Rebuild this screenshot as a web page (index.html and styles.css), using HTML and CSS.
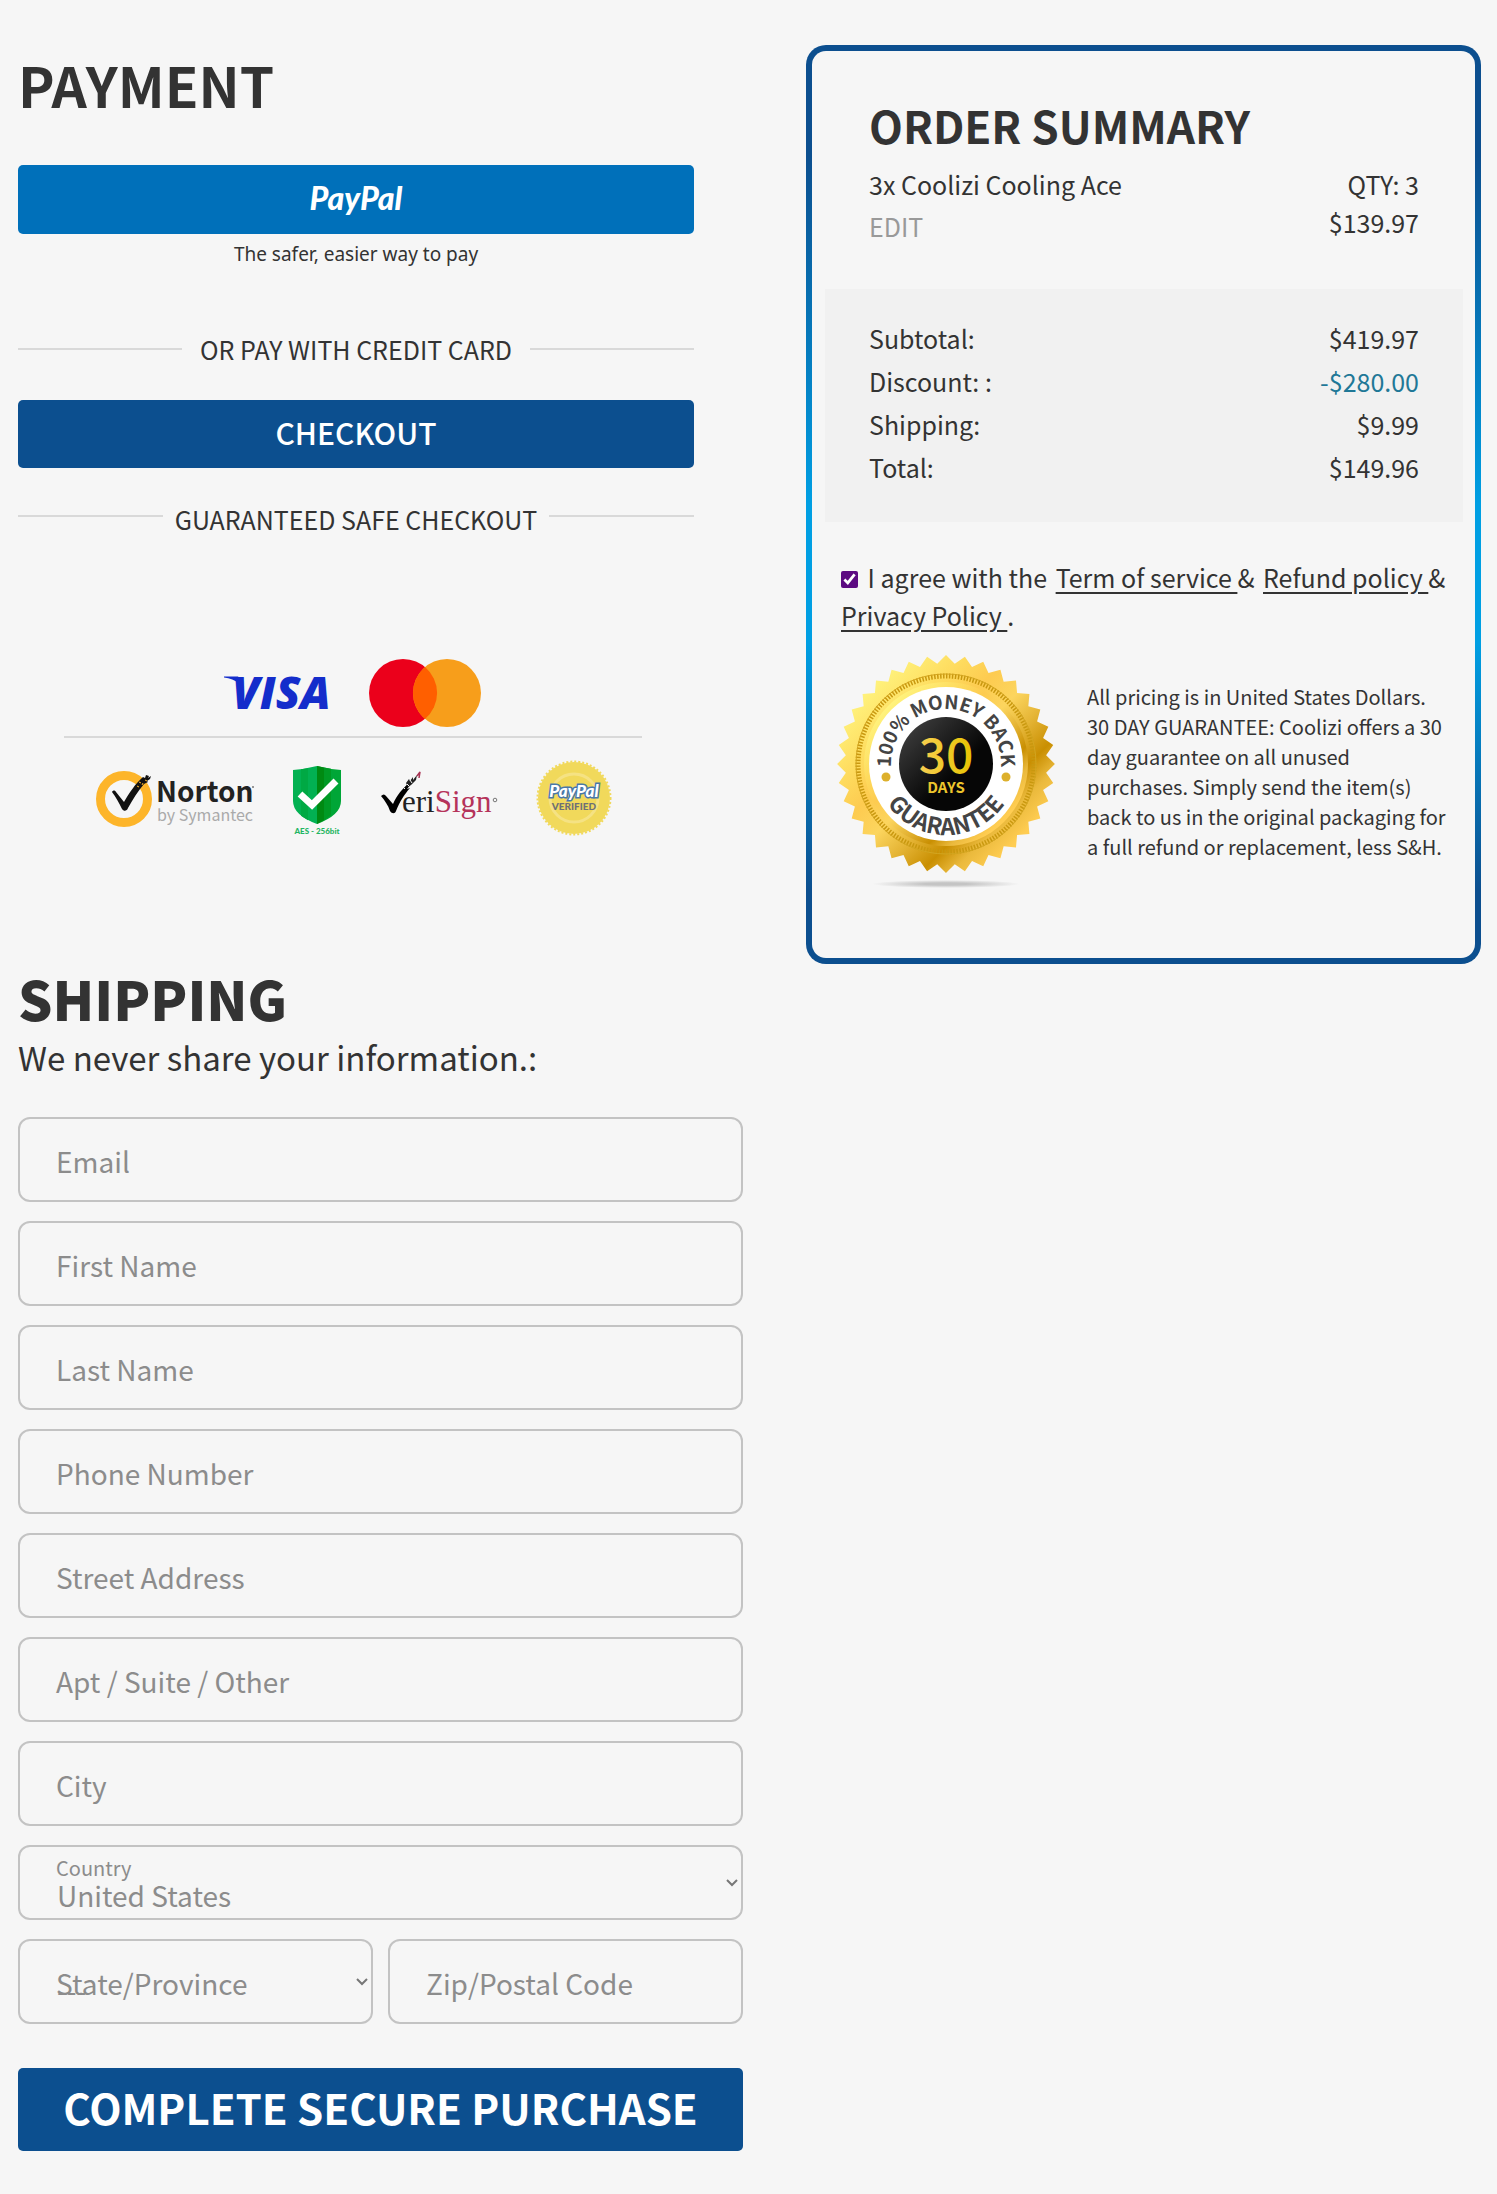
FILE: index.html
```
<!DOCTYPE html>
<html lang="en">
<head>
    <meta charset="UTF-8">
    <meta name="viewport" content="width=device-width, initial-scale=1.0">
    <title>Checkout</title>
    <link rel="stylesheet" href="styles.css">
</head>
<body>
    <main class="checkout">
        <div class="checkout-main">
            <section class="payment">
                <h1 class="payment-title">PAYMENT</h1>
                <button type="button" class="btn btn-paypal">PayPal</button>
                <p class="paypal-note">The safer, easier way to pay</p>
                <div class="divider">OR PAY WITH CREDIT CARD</div>
                <button type="button" class="btn btn-checkout">CHECKOUT</button>
                <div class="divider divider-tight">GUARANTEED SAFE CHECKOUT</div>

                <div class="badges">
                    <div class="badge-row badge-cards">
                        <svg width="112" height="40" viewBox="0 -3 112 40" role="img" aria-label="Visa">
                            <path d="M0 .5h14l4 4-3 3C11 4 6 2 0 1.500z" fill="#142dcb"/>
                            <text class="visa" x="8" y="33">VISA</text>
                        </svg>
                        <svg width="114" height="68" viewBox="0 0 114 68" role="img" aria-label="Mastercard">
                            <circle cx="35" cy="34" r="34" fill="#eb001b"/>
                            <circle cx="79" cy="34" r="34" fill="#f79e1b"/>
                            <path d="M57 8a34 34 0 0 1 0 52a34 34 0 0 1 0-52z" fill="#ff5f00"/>
                        </svg>
                    </div>
                    <div class="badge-row">
                        <svg width="160" height="76" viewBox="0 0 160 76" role="img" aria-label="Norton by Symantec">
                            <circle cx="30" cy="39" r="23.500" fill="none" stroke="#fdb52a" stroke-width="9"/>
                            <path d="M18 32c1-2 3-2 4 0l8 10c6-10 11-18 19-25l2 1 1-3 3 1-1 2 3-2-1 3-3 2 1 1-4 2c-6 7-11 15-16 24-1 3-4 4-6 1-3-6-6-12-10-17z" fill="#111"/>
                            <path d="M45 22l2 1M48 25l1-2M51 20l2 1M43 26l2 1" stroke="#fdb52a" stroke-width="1"/>
                            <text class="norton" x="62" y="42">Norton</text>
                            <text class="symantec" x="63" y="61">by Symantec</text>
                            <circle cx="159" cy="27" r="1" fill="#777"/>
                        </svg>
                        <svg width="50" height="76" viewBox="0 0 50 76" role="img" aria-label="AES 256 bit">
                            <path d="M25 6Q13 9 1 10v31q0 14 24 23z" fill="#02b152"/>
                            <path d="M16 8.200 9 9.300v46.500l7 4.500z" fill="#00a944"/>
                            <path d="M25 6q12 3 24 4v31q0 14-24 23z" fill="#00a637"/>
                            <path d="M25 6l7 1.500v52.800L25 64z" fill="#008a12"/>
                            <path d="M32 7.500l7 1.200v46.500l-7 5z" fill="#009a25"/>
                            <path d="M8 34l12 11 24-24" fill="none" stroke="#fff" stroke-width="7"/>
                            <text class="aes" x="25" y="74" text-anchor="middle">AES - 256bit</text>
                        </svg>
                        <svg width="118" height="76" viewBox="0 0 118 76" role="img" aria-label="VeriSign">
                            <path d="M1 36q3-3 5 0l7 8c4-9 9-15 17-22l1 2-4 5 3-1c-6 7-10 13-14 23-1 3-4 3-6 0-2-6-5-10-9-15z" fill="#000"/>
                            <path d="M26 23l3-4 1 2 3-4v3l4-5-1 5-5 5-3 2z" fill="#222"/>
                            <path d="M27 24l2 2M30 20l2 3M23 27l2 2" stroke="#f6f6f6"/>
                            <path d="M37 16l3-4-1 6" fill="none" stroke="#a83253" stroke-width="1.500"/>
                            <text class="verisign" x="22" y="52">eri<tspan fill="#b5335a">Sign</tspan></text>
                            <circle cx="115" cy="40" r="1.800" fill="none" stroke="#777"/>
                        </svg>
                        <svg width="76" height="76" viewBox="0 0 76 76" role="img" aria-label="PayPal Verified">
                            <circle cx="38" cy="38" r="36" fill="#f1d95b"/>
                            <circle cx="38" cy="38" r="36.500" fill="none" stroke="#f1d95b" stroke-width="2" stroke-dasharray="2 2"/>
                            <circle cx="38" cy="38" r="24" fill="none" stroke="#f5e283" stroke-width="3"/>
                            <text class="pp-badge" x="38" y="37" text-anchor="middle">PayPal</text>
                            <text class="pp-verified" x="38" y="50" text-anchor="middle">VERIFIED</text>
                        </svg>
                    </div>
                </div>
            </section>

            <form class="shipping">
                <h2 class="shipping-title">SHIPPING</h2>
                <p class="shipping-note">We never share your information.:</p>

                <div class="fields">
                    <div class="field">
                        <input type="email" id="email">
                        <label for="email">Email</label>
                    </div>
                    <div class="field">
                        <input type="text" id="firstName">
                        <label for="firstName">First Name</label>
                    </div>
                    <div class="field">
                        <input type="text" id="lastName">
                        <label for="lastName">Last Name</label>
                    </div>
                    <div class="field">
                        <input type="tel" id="phone">
                        <label for="phone">Phone Number</label>
                    </div>
                    <div class="field">
                        <input type="text" id="street">
                        <label for="street">Street Address</label>
                    </div>
                    <div class="field">
                        <input type="text" id="apt">
                        <label for="apt">Apt / Suite / Other</label>
                    </div>
                    <div class="field">
                        <input type="text" id="city">
                        <label for="city">City</label>
                    </div>
                    <div class="field field-filled">
                        <select id="country">
                            <option>United States</option>
                        </select>
                        <label for="country">Country</label>
                        <svg class="chevron" width="12" height="8" viewBox="0 0 12 8"><path d="M1 1l5 5 5-5"/></svg>
                    </div>
                    <div class="field-pair">
                        <div class="field">
                            <select id="state">
                                <option>---</option>
                            </select>
                            <label for="state">State/Province</label>
                            <svg class="chevron" width="12" height="8" viewBox="0 0 12 8"><path d="M1 1l5 5 5-5"/></svg>
                        </div>
                        <div class="field">
                            <input type="text" id="zip">
                            <label for="zip">Zip/Postal Code</label>
                        </div>
                    </div>
                </div>

                <button type="submit" class="btn btn-complete">COMPLETE SECURE PURCHASE</button>
            </form>
        </div>

        <aside class="summary">
            <h2 class="summary-title">ORDER SUMMARY</h2>
            <div class="summary-item">
                <div>
                    <div>3x Coolizi Cooling Ace</div>
                    <a href="#" class="edit-link">EDIT</a>
                </div>
                <div class="item-price">
                    <div>QTY: 3</div>
                    <div>$139.97</div>
                </div>
            </div>

            <div class="totals">
                <table>
                    <tr><th>Subtotal:</th><td>$419.97</td></tr>
                    <tr><th>Discount: :</th><td class="discount">-$280.00</td></tr>
                    <tr><th>Shipping:</th><td>$9.99</td></tr>
                    <tr><th>Total:</th><td>$149.96</td></tr>
                </table>
            </div>

            <div class="terms">
                <input type="checkbox" id="agree" checked>
                <label for="agree">I agree with the</label>
                <a href="#">Term of service&nbsp;</a>&amp; <a href="#">Refund policy&nbsp;</a>&amp;
                <a href="#" class="first">Privacy Policy&nbsp;</a>.
            </div>

            <div class="guarantee">
                <svg class="seal" width="218" height="234" viewBox="0 0 218 234" role="img" aria-label="30 days money back guarantee">
                    <defs>
                        <linearGradient id="gold" x1="0" y1="0" x2="1" y2="1">
                            <stop offset=".15" stop-color="#fff27c"/>
                            <stop offset=".3" stop-color="#fedb5e"/>
                            <stop offset=".4" stop-color="#fdcb50"/>
                            <stop offset=".5" stop-color="#fcd55e"/>
                            <stop offset=".6" stop-color="#e3b232"/>
                            <stop offset=".69" stop-color="#c98f02"/>
                            <stop offset=".76" stop-color="#eab93c"/>
                            <stop offset=".84" stop-color="#ffcd52"/>
                        </linearGradient>
                        <linearGradient id="dark" x1="0" y1="0" x2="1" y2="1">
                            <stop offset=".1" stop-color="#3c3c3c"/>
                            <stop offset=".6" stop-color="#060606"/>
                        </linearGradient>
                        <linearGradient id="digits" x1="0" y1="0" x2="1" y2="0">
                            <stop offset="0" stop-color="#f8cf53"/>
                            <stop offset="1" stop-color="#e6c400"/>
                        </linearGradient>
                        <radialGradient id="shadow">
                            <stop offset=".3" stop-color="#c4c4c4"/>
                            <stop offset="1" stop-color="#c4c4c4" stop-opacity="0"/>
                        </radialGradient>
                        <!-- nine turned squares make the 36 teeth -->
                        <clipPath id="teeth">
                            <rect x="32" y="32" width="154" height="154" transform="rotate(5 109 109)"/>
                            <rect x="32" y="32" width="154" height="154" transform="rotate(15 109 109)"/>
                            <rect x="32" y="32" width="154" height="154" transform="rotate(25 109 109)"/>
                            <rect x="32" y="32" width="154" height="154" transform="rotate(35 109 109)"/>
                            <rect x="32" y="32" width="154" height="154" transform="rotate(45 109 109)"/>
                            <rect x="32" y="32" width="154" height="154" transform="rotate(55 109 109)"/>
                            <rect x="32" y="32" width="154" height="154" transform="rotate(65 109 109)"/>
                            <rect x="32" y="32" width="154" height="154" transform="rotate(75 109 109)"/>
                            <rect x="32" y="32" width="154" height="154" transform="rotate(85 109 109)"/>
                        </clipPath>
                        <path id="arcTop" d="M109 164a55 55 0 0 1 0-110a55 55 0 0 1 0 110"/>
                        <path id="arcBottom" d="M38 109a71 71 0 0 0 142 0"/>
                    </defs>
                    <ellipse cx="109" cy="229" rx="74" ry="4" fill="url(#shadow)"/>
                    <rect width="218" height="218" fill="url(#gold)" clip-path="url(#teeth)"/>
                    <circle cx="109" cy="109" r="88" fill="none" stroke="#c9980f" stroke-width="5" stroke-dasharray="1.500 1.500"/>
                    <circle cx="109" cy="109" r="90" fill="none" stroke="#d3a520" stroke-width="1"/>
                    <circle cx="109" cy="109" r="82" fill="url(#gold)"/>
                    <circle cx="109" cy="109" r="77" fill="#fff"/>
                    <circle cx="109" cy="109" r="47" fill="url(#dark)"/>
                    <text class="seal-text" text-anchor="middle"><textPath href="#arcTop" startOffset="50%">100% MONEY BACK</textPath></text>
                    <text class="seal-text seal-text-low" text-anchor="middle"><textPath href="#arcBottom" startOffset="50%">GUARANTEE</textPath></text>
                    <circle cx="49" cy="122" r="4.500" fill="#ddb02c"/>
                    <circle cx="169" cy="122" r="4.500" fill="#ddb02c"/>
                    <text class="seal-number" x="109" y="118" text-anchor="middle">30</text>
                    <text class="seal-days" x="109" y="138" text-anchor="middle">DAYS</text>
                </svg>
                <p>All pricing is in United States Dollars. 30 DAY GUARANTEE: Coolizi offers a 30 day guarantee on all unused purchases. Simply send the item(s) back to us in the original packaging for a full refund or replacement, less S&amp;H.</p>
            </div>
        </aside>
    </main>
</body>
</html>
```
FILE: styles.css
```
:root {
    --bg-color: #f6f6f6;
    --text-color: #333;
    --muted: #8c8c8c;
    --line: #d9d9d9;
    --field-border: #c3c3c3;
    --blue: #0c4f8f;
    --paypal: #0070ba;
}

* {
    box-sizing: border-box;
}

body {
    margin: 0;
    font-family: 'Noto Sans CJK SC', 'Noto Sans', sans-serif;
    font-size: 25px;
    line-height: 38px;
    background-color: var(--bg-color);
    color: var(--text-color);
}

h1, h2, p {
    margin: 0;
}

.checkout {
    display: grid;
    grid-template-columns: 725fr 675fr;
    gap: 63px;
    align-items: start;
    padding: 45px 16px 44px 18px;
}

/* Payment */
.payment {
    padding: 7px 49px 0 0;
}

.payment-title {
    font-size: 55px;
    line-height: 64px;
    margin-bottom: 49px;
}

.btn {
    display: block;
    width: 100%;
    padding: 0 0 4px;
    border: none;
    border-radius: 5px;
    background-color: var(--blue);
    color: white;
    font-family: inherit;
    text-align: center;
    cursor: pointer;
}

.btn-paypal {
    height: 69px;
    background-color: var(--paypal);
    font-family: 'Lato', sans-serif;
    font-size: 32px;
    font-weight: 900;
    font-style: italic;
}

.btn-checkout {
    height: 68px;
    font-size: 30px;
    font-weight: 500;
}

.paypal-note {
    margin: 8px 0 64px;
    font-family: 'Noto Sans', sans-serif;
    font-size: 19px;
    line-height: 24px;
    text-align: center;
}

.divider {
    display: flex;
    align-items: center;
    gap: 18px;
    margin-bottom: 32px;
}

.divider::before,
.divider::after {
    content: "";
    flex: 1;
    height: 2px;
    background-color: var(--line);
}

.divider-tight {
    gap: 12px;
    margin: 32px 0 121px;
}

.divider-tight::before,
.divider-tight::after {
    margin-bottom: 6px;
}

.badges {
    padding: 0 52px 0 46px;
}

.badge-row {
    display: flex;
    justify-content: center;
    align-items: center;
    gap: 38px;
    padding-top: 22px;
}

.badge-cards {
    gap: 32px;
    padding: 0 0 9px;
    border-bottom: 2px solid var(--line);
}

.visa {
    font: italic 800 45px 'Open Sans', sans-serif;
    fill: #142dcb;
}

.norton {
    font: 700 28px 'Noto Sans CJK SC', sans-serif;
    fill: #222;
}

.symantec {
    font: 16px 'Noto Sans CJK SC', sans-serif;
    fill: #aaa;
}

.aes {
    font: 900 8px 'Lato', sans-serif;
    fill: #1fb562;
}

.verisign {
    font: 31px 'Liberation Serif', serif;
    fill: #222;
}

.pp-badge {
    font: italic 900 17px 'Lato', sans-serif;
    fill: white;
    stroke: #4a78a8;
    stroke-width: 3px;
    paint-order: stroke;
}

.pp-verified {
    font: 900 10px 'Lato', sans-serif;
    fill: #6e7076;
}

/* Shipping */
.shipping {
    padding-top: 130px;
}

.shipping-title {
    margin-bottom: 5px;
    font-size: 54px;
    font-weight: 900;
    line-height: 64px;
}

.shipping-note {
    margin-bottom: 38px;
    font-size: 33px;
    line-height: 44px;
}

.fields {
    display: grid;
    gap: 19px;
}

.field {
    position: relative;
}

.field-pair {
    display: grid;
    grid-template-columns: 1fr 1fr;
    gap: 15px;
}

.field input,
.field select {
    display: block;
    width: 100%;
    height: 85px;
    padding: 24px 38px 16px;
    border: 2px solid var(--field-border);
    border-radius: 12px;
    background-color: transparent;
    color: var(--muted);
    font-family: inherit;
    font-size: 28px;
}

.field select {
    padding: 16px 24px 0 37px;
    appearance: none;
}

.field label {
    position: absolute;
    left: 38px;
    top: 24px;
    color: var(--muted);
    font-size: 28px;
    line-height: 40px;
    pointer-events: none;
}

.field-filled select {
    height: 75px;
    padding-top: 24px;
}

.field-filled label {
    top: 9px;
    font-size: 20px;
    line-height: 28px;
}

.chevron {
    position: absolute;
    right: 5px;
    top: calc(50% - 4px);
    fill: none;
    stroke: #777;
    stroke-width: 2px;
    pointer-events: none;
}

.btn-complete {
    height: 83px;
    margin-top: 44px;
    padding-bottom: 6px;
    font-size: 42px;
    font-weight: 700;
}

/* Order summary */
.summary {
    padding: 48px 12px 69px 13px;
    border: 6px solid transparent;
    border-radius: 20px;
    background:
        linear-gradient(var(--bg-color), var(--bg-color)) padding-box,
        linear-gradient(#0c4f8f, #0c4f8f 12%, #009fe3 50%, #009fe3 65%, #0c4f8f 92%) border-box;
}

.summary-title {
    margin: 0 44px 14px;
    font-size: 44px;
    line-height: 52px;
}

.summary-item {
    display: flex;
    justify-content: space-between;
    margin: 0 44px 44px;
    height: 80px;
}

.item-price {
    text-align: right;
}

.edit-link {
    display: inline-block;
    margin-top: 4px;
    color: #999;
    text-decoration: none;
}

.totals {
    padding: 28px 44px 33px;
    background-color: #f1f1f1;
}

.totals table {
    width: 100%;
    border-collapse: collapse;
    line-height: 43px;
}

.totals th,
.totals td {
    padding: 0;
    font-weight: 400;
    text-align: left;
}

.totals td {
    text-align: right;
}

.totals .discount {
    color: #1f7897;
}

.terms {
    margin: 36px 0 21px 16px;
}

.terms input {
    width: 17px;
    height: 17px;
    margin: 0 4px 0 0;
    accent-color: #5c0a82;
}

.terms a {
    margin-left: 3px;
    color: inherit;
    text-underline-offset: 4px;
}

.terms .first {
    margin-left: 0;
}

.guarantee {
    display: flex;
    align-items: center;
    gap: 32px;
    margin: 0 12px;
    font-size: 20px;
    line-height: 30px;
}

.seal {
    flex: none;
}

.seal-text {
    font: 700 19px 'Noto Sans CJK SC', sans-serif;
    fill: #444;
}

.seal-text-low {
    font-size: 23px;
}

.seal-number {
    font: 500 48px 'Noto Sans CJK SC', sans-serif;
    fill: url(#digits);
}

.seal-days {
    font: 700 15px 'Noto Sans CJK SC', sans-serif;
    fill: #ecc52c;
}

@media (max-width: 1000px) {
    .checkout {
        grid-template-columns: 1fr;
    }
}
```
